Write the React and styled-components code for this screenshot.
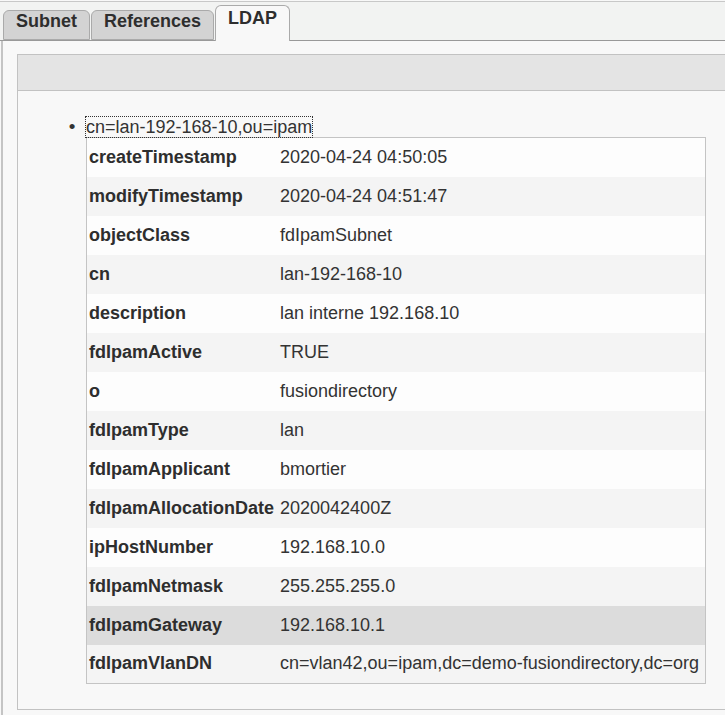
import styled, { createGlobalStyle } from "styled-components";

const GlobalStyle = createGlobalStyle`
  html, body {
    margin: 0;
    padding: 0;
    background: #f8f8f8;
    overflow: hidden;
  }
  body {
    font-family: "Liberation Sans", Arial, sans-serif;
    font-size: 18px;
    color: #333;
  }
`;

const TabBar = styled.div`
  display: flex;
  align-items: flex-end;
  gap: 1px;
  height: 38px;
  margin-top: 1px;
  padding-left: 3px;
  background: #f2f3f2;
  border-top: 1px solid #c8c8c8;
  border-bottom: 1px solid #999;
`;

const Tab = styled.div`
  box-sizing: border-box;
  height: ${(p) => (p.$active ? "36px" : "30px")};
  margin-bottom: ${(p) => (p.$active ? "-1px" : "0")};
  padding: ${(p) => (p.$active ? "2px 12px 0" : "0 12px")};
  background: ${(p) => (p.$active ? "#f8f8f8" : "#d3d3d3")};
  border: 1px solid #aaa;
  border-bottom: ${(p) => (p.$active ? "none" : "1px solid #aaa")};
  border-radius: 6px 6px 0 0;
  font-weight: bold;
  color: #2e2e2e;
  line-height: 21px;
  white-space: nowrap;
`;

const Panel = styled.div`
  margin-left: 1px;
  padding: 13px 0 20px 14px;
  border-left: 2px solid #c4c4c4;
  background: #f8f8f8;
`;

const Box = styled.div`
  margin-right: -30px;
  border: 1px solid #c2c2c2;
  background: #f8f8f8;
`;

const BoxHeader = styled.div`
  height: 35px;
  background: #e4e4e4;
  border-bottom: 1px solid #c2c2c2;
`;

const EntryList = styled.ul`
  margin: 26px 0 25px 0;
  padding-left: 68px;
  list-style: disc;
  line-height: 20px;

  li::marker {
    content: "\\2022\\00a0\\00a0";
    font-size: 19px;
    color: #333;
  }
`;

const DnLink = styled.span`
  outline: 1px dotted #333;
  outline-offset: 0;
  color: #333;
`;

const AttrTable = styled.table`
  border-collapse: collapse;
  border: 1px solid #c4c4c4;
  width: 620px;
  margin-top: 0;
`;

const Row = styled.tr`
  background: ${(p) => (p.$hover ? "#dcdcdc" : p.$odd ? "#f4f4f4" : "#fdfdfd")};
`;

const Cell = styled.td`
  height: 39px;
  box-sizing: border-box;
  padding: 0 3px 0 ${(p) => (p.$label ? "2px" : "3px")};
  vertical-align: middle;
  line-height: 21px;
  white-space: nowrap;
  font-weight: ${(p) => (p.$label ? "bold" : "normal")};
  width: ${(p) => (p.$label ? "188px" : "auto")};
  color: ${(p) => (p.$label ? "#2e2e2e" : "#333")};
`;

const attributes = [
  ["createTimestamp", "2020-04-24 04:50:05"],
  ["modifyTimestamp", "2020-04-24 04:51:47"],
  ["objectClass", "fdIpamSubnet"],
  ["cn", "lan-192-168-10"],
  ["description", "lan interne 192.168.10"],
  ["fdIpamActive", "TRUE"],
  ["o", "fusiondirectory"],
  ["fdIpamType", "lan"],
  ["fdIpamApplicant", "bmortier"],
  ["fdIpamAllocationDate", "2020042400Z"],
  ["ipHostNumber", "192.168.10.0"],
  ["fdIpamNetmask", "255.255.255.0"],
  ["fdIpamGateway", "192.168.10.1"],
  ["fdIpamVlanDN", "cn=vlan42,ou=ipam,dc=demo-fusiondirectory,dc=org"],
];

export default function App() {
  return (
    <>
      <GlobalStyle />
      <TabBar>
        <Tab>Subnet</Tab>
        <Tab>References</Tab>
        <Tab $active>LDAP</Tab>
      </TabBar>
      <Panel>
        <Box>
          <BoxHeader />
          <EntryList>
            <li>
              <DnLink>cn=lan-192-168-10,ou=ipam</DnLink>
              <AttrTable>
                <tbody>
                  {attributes.map(([name, value], i) => (
                    <Row key={name} $odd={i % 2 === 1} $hover={name === "fdIpamGateway"}>
                      <Cell $label>{name}</Cell>
                      <Cell>{value}</Cell>
                    </Row>
                  ))}
                </tbody>
              </AttrTable>
            </li>
          </EntryList>
        </Box>
      </Panel>
    </>
  );
}
